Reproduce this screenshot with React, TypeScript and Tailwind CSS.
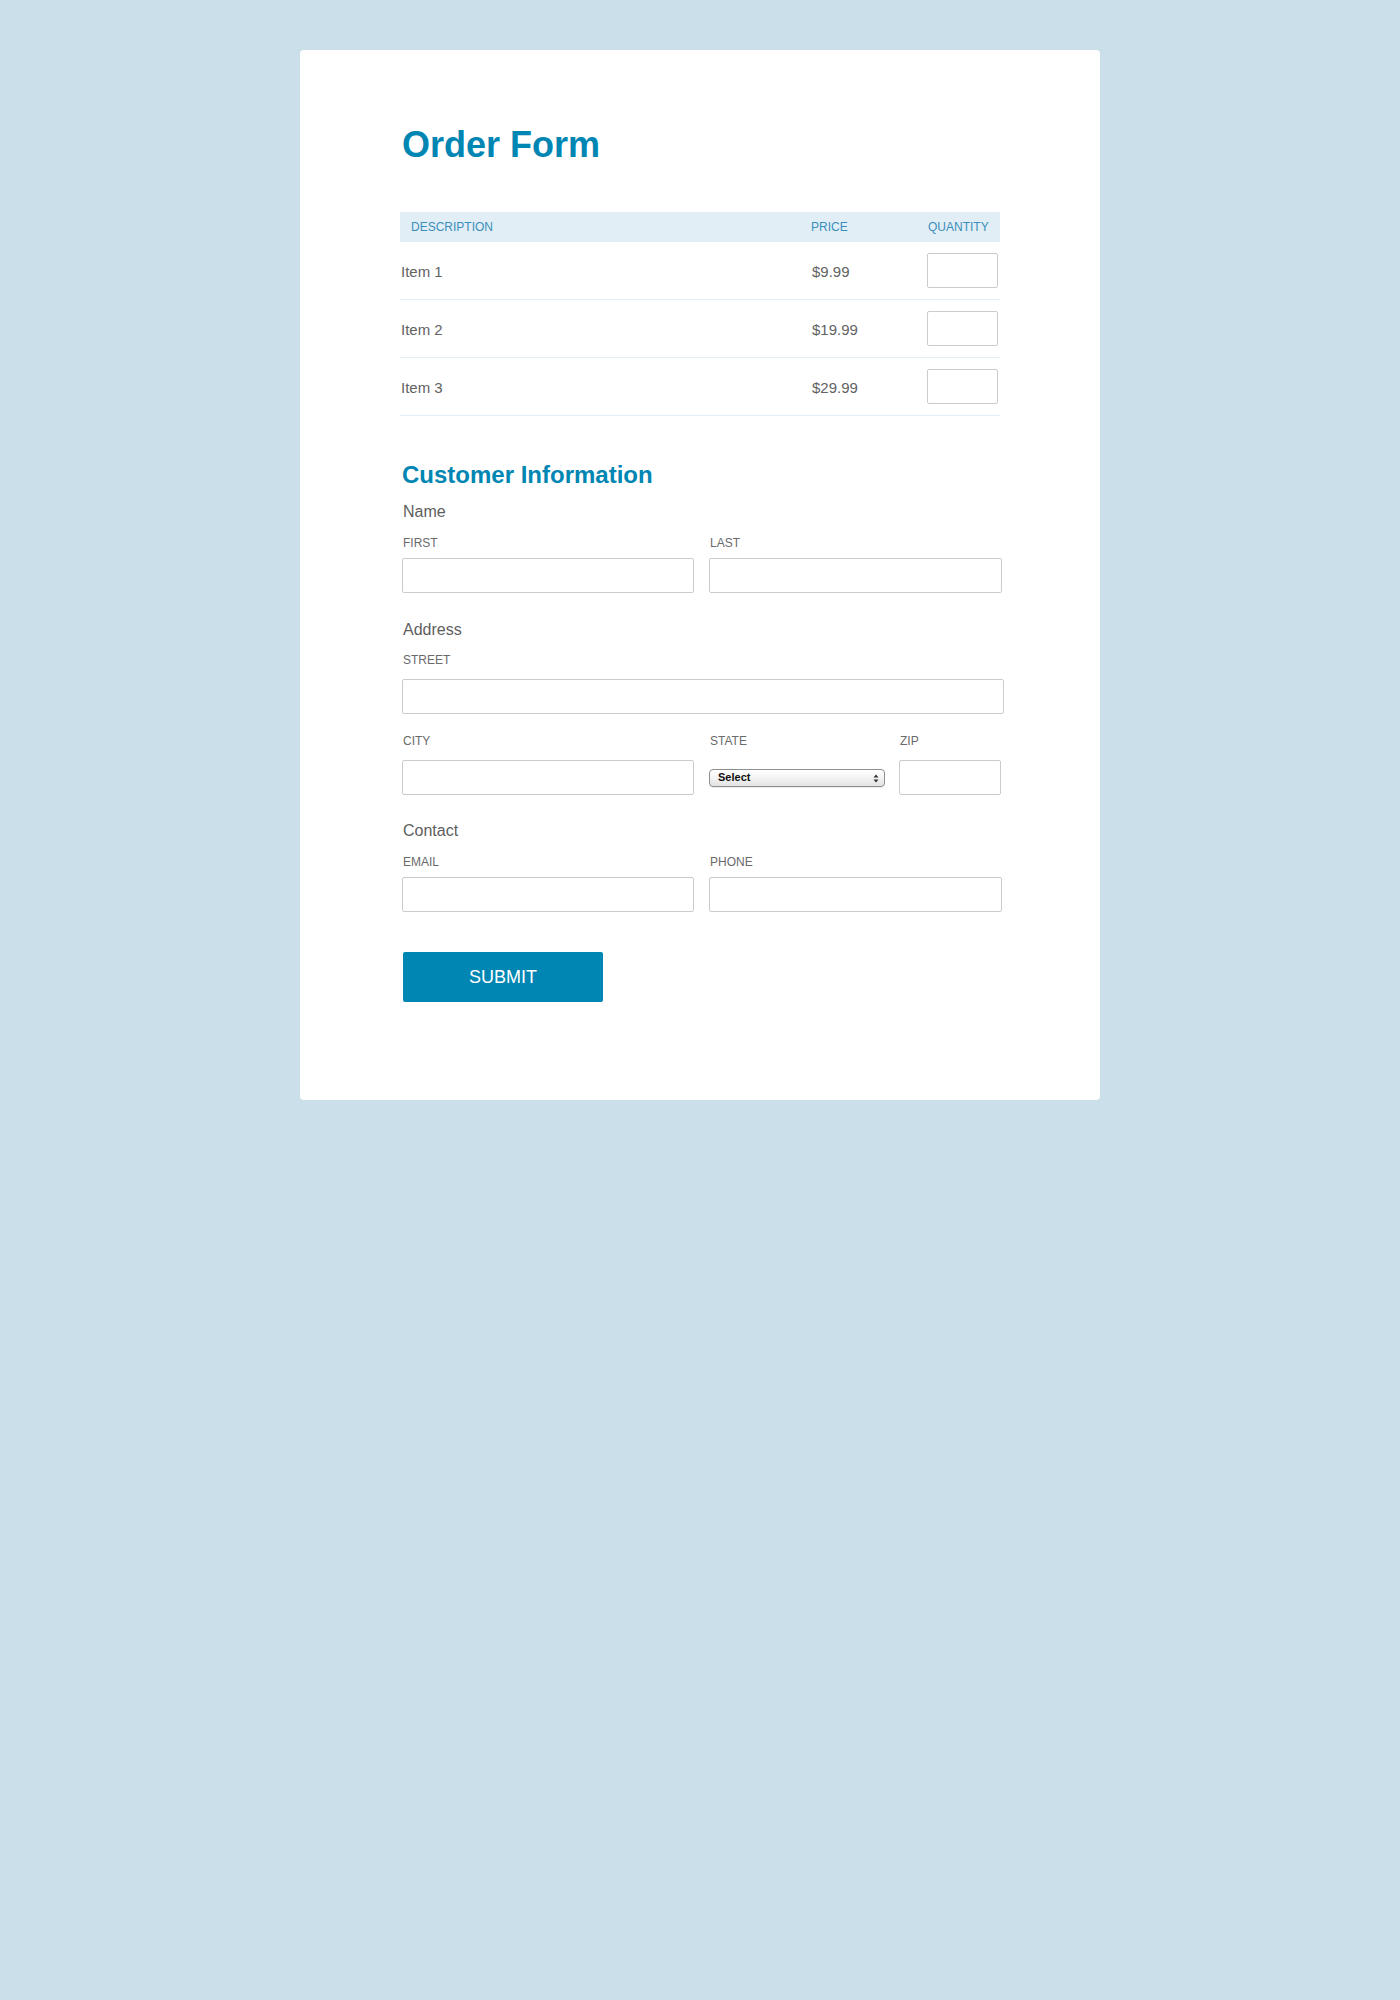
import React from "react";

const font = { fontFamily: '"Liberation Sans", Arial, Helvetica, sans-serif' };

function Input({ className = "" }: { className?: string }) {
  return (
    <div
      className={`h-[35px] rounded-[2px] border border-[#cccccc] bg-white ${className}`}
    />
  );
}

function Label({ children }: { children: React.ReactNode }) {
  return (
    <div className="h-[16px] text-[12px] leading-[16px] text-[#6a6a6a] pl-[1px]">
      {children}
    </div>
  );
}

function Group({ children }: { children: React.ReactNode }) {
  return (
    <div className="h-[20px] text-[16px] leading-[20px] text-[#5e5e5e] pl-[1px]">
      {children}
    </div>
  );
}

const items = [
  { name: "Item 1", price: "$9.99" },
  { name: "Item 2", price: "$19.99" },
  { name: "Item 3", price: "$29.99" },
];

export default function App() {
  return (
    <div className="min-h-[2000px] w-full bg-[#cadfea] pt-[50px]" style={font}>
      <div className="mx-auto w-[800px] rounded-[4px] bg-white pl-[100px] pr-[100px] pt-[77px] pb-[98px]">
        <h1 className="h-[36px] text-[36px] font-bold leading-[36px] text-[#0086b3] pl-[2px]">
          Order Form
        </h1>

        {/* Table */}
        <div className="mt-[49px] w-[600px]">
          <div className="grid h-[30px] grid-cols-[1fr_116px_73px] items-center bg-[#e1eef5] text-[12px] text-[#3a8ebc]">
            <div className="pl-[11px]">DESCRIPTION</div>
            <div>PRICE</div>
            <div className="pl-[1px]">QUANTITY</div>
          </div>
          {items.map((it) => (
            <div
              key={it.name}
              className="grid h-[58px] grid-cols-[1fr_116px_73px] items-center border-b border-[#e1eef4] text-[15px] text-[#626262]"
            >
              <div className="pl-[1px] pt-[3px]">{it.name}</div>
              <div className="pl-[1px] pt-[3px]">{it.price}</div>
              <div>
                <div className="h-[35px] w-[71px] rounded-[2px] border border-[#cccccc] bg-white" />
              </div>
            </div>
          ))}
        </div>

        {/* Customer information */}
        <div className="pl-[2px]">
          <h2 className="mt-[47px] h-[24px] text-[24px] font-bold leading-[24px] text-[#0086b3]">
            Customer Information
          </h2>

          <div className="mt-[15px]">
            <Group>Name</Group>
          </div>
          <div className="mt-[13px] flex gap-[15px]">
            <div className="w-[292px]">
              <Label>FIRST</Label>
              <Input className="mt-[7px] w-[292px]" />
            </div>
            <div className="w-[293px]">
              <Label>LAST</Label>
              <Input className="mt-[7px] w-[293px]" />
            </div>
          </div>

          <div className="mt-[27px]">
            <Group>Address</Group>
          </div>
          <div className="mt-[12px]">
            <Label>STREET</Label>
            <Input className="mt-[11px] w-[602px]" />
          </div>
          <div className="mt-[19px] flex">
            <div className="w-[292px]">
              <Label>CITY</Label>
              <Input className="mt-[11px] w-[292px]" />
            </div>
            <div className="ml-[15px] w-[176px]">
              <Label>STATE</Label>
              <div className="mt-[11px] flex h-[35px] items-center">
                <div className="relative flex h-[18px] w-[176px] items-center rounded-[4px] border border-[#8e8e8e] bg-gradient-to-b from-[#ffffff] via-[#f3f3f3] to-[#e2e2e2] pl-[8px] shadow-[0_1px_0_rgba(0,0,0,0.08)]">
                  <span className="text-[11px] font-bold leading-none text-[#111111]">
                    Select
                  </span>
                  <svg
                    className="absolute right-[5px] top-[4px]"
                    width="6"
                    height="9"
                    viewBox="0 0 6 9"
                  >
                    <path d="M3 0.5 L5.5 3.5 L0.5 3.5 Z" fill="#333" />
                    <path d="M3 8.5 L5.5 5.5 L0.5 5.5 Z" fill="#333" />
                  </svg>
                </div>
              </div>
            </div>
            <div className="ml-[14px] w-[102px]">
              <Label>ZIP</Label>
              <Input className="mt-[11px] w-[102px]" />
            </div>
          </div>

          <div className="mt-[26px]">
            <Group>Contact</Group>
          </div>
          <div className="mt-[13px] flex gap-[15px]">
            <div className="w-[292px]">
              <Label>EMAIL</Label>
              <Input className="mt-[7px] w-[292px]" />
            </div>
            <div className="w-[293px]">
              <Label>PHONE</Label>
              <Input className="mt-[7px] w-[293px]" />
            </div>
          </div>

          <button
            className="mt-[40px] ml-[1px] flex h-[50px] w-[200px] items-center justify-center rounded-[2px] bg-[#0086b3] text-[18px] text-white"
            style={font}
          >
            SUBMIT
          </button>
        </div>
      </div>
    </div>
  );
}
